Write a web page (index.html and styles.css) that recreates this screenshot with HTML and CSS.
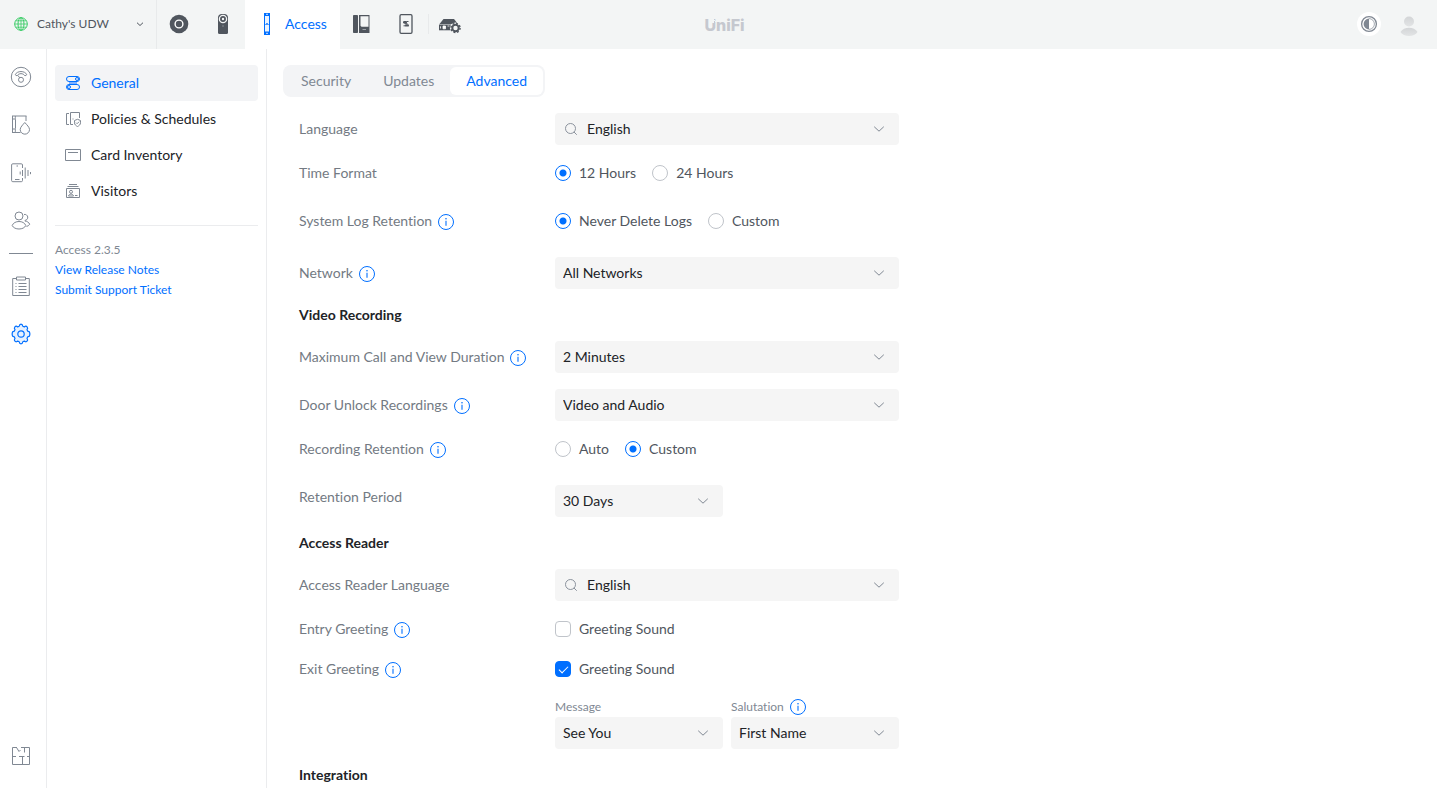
FILE: index.html
```html
<!DOCTYPE html>
<html lang="en">
<head>
<meta charset="utf-8">
<title>UniFi Access - Advanced Settings</title>
<link rel="stylesheet" href="styles.css">
</head>
<body>
<svg class="defs" aria-hidden="true">
  <symbol id="chevron" viewBox="0 0 12 12"><path d="M1.500 4 6 8.200 10.500 4" fill="none" stroke="currentColor" stroke-linecap="round" stroke-linejoin="round"/></symbol>
  <symbol id="search" viewBox="0 0 16 16"><circle cx="7.500" cy="7.500" r="5" fill="none" stroke="currentColor" stroke-width=".9"/><path d="m11.200 11.200 2.300 2.300" stroke="currentColor" stroke-width=".9" stroke-linecap="round"/></symbol>
  <symbol id="info" viewBox="0 0 16 16"><circle cx="8" cy="8" r="7.500" fill="none" stroke="currentColor"/><path d="M8 6.800v5" stroke="currentColor" stroke-width="1.100"/><circle cx="8" cy="4.800" r=".8" fill="currentColor"/></symbol>
</svg>

<header class="topbar">
  <nav class="apps" aria-label="Applications">
    <button class="site" type="button">
      <svg class="globe" viewBox="0 0 14 14" fill="none" stroke="currentColor"><circle cx="7" cy="7" r="6.300"/><ellipse cx="7" cy="7" rx="3" ry="6.300"/><path d="M7 .7v12.600M.7 7h12.600M1.700 3.800h10.600M1.700 10.200h10.600" stroke-width=".8"/></svg>
      <span>Cathy's UDW</span>
      <svg class="site-arrow" viewBox="0 0 12 12"><path d="M3 4.700 6 7.500 9 4.700" fill="none" stroke="currentColor"/></svg>
    </button>
    <button class="app" type="button" aria-label="Network">
      <svg viewBox="0 0 24 24"><circle cx="12" cy="12" r="9.300" fill="currentColor"/><circle cx="12" cy="12" r="3.900" fill="none" stroke="#fff" stroke-width="1.400"/></svg>
    </button>
    <button class="app" type="button" aria-label="Protect">
      <svg viewBox="0 0 24 24"><rect x="7" y="2" width="10" height="20" rx="4" fill="currentColor"/><path d="M7 14h10v6.500a1.500 1.500 0 0 1-1.500 1.500h-7A1.500 1.500 0 0 1 7 20.500z" fill="currentColor"/><circle cx="12" cy="7" r="3.600" fill="none" stroke="#f3f5f5" stroke-width="1.300"/><circle cx="12" cy="7" r="1.200" fill="#f3f5f5"/><circle cx="12" cy="14" r=".8" fill="#8b9198"/></svg>
    </button>
    <button class="app app-active" type="button" aria-current="page">
      <svg class="reader" viewBox="0 0 8 24"><rect x="1.500" y="1.500" width="5" height="21" rx=".5" fill="#eaf3ff" stroke="currentColor"/><path d="M1 1h6v3H1zM1 19.500h6V23H1z" fill="currentColor"/><path d="M2.500 12.500 4 11l1.500 1.500z" fill="none" stroke="currentColor" stroke-width=".7"/><path d="M3 2.300h2M3 21.300h2" stroke="#fff" stroke-width=".8"/></svg>
      <span>Access</span>
    </button>
    <button class="app" type="button" aria-label="Talk">
      <svg viewBox="0 0 24 24"><rect x="3" y="3" width="5" height="18" rx=".8" fill="currentColor"/><path d="M9 3h10.500v18H9z" fill="currentColor"/><path d="M10.500 4.200h8v10.600h-7l-1-1z" fill="#f3f5f5"/><path d="M12.500 17.500h3.500" stroke="#9ca1a7"/></svg>
    </button>
    <button class="app" type="button" aria-label="Connect">
      <svg viewBox="0 0 24 24"><rect x="6" y="2.700" width="12" height="18.600" rx="1.200" fill="none" stroke="currentColor" stroke-width="1.300"/><rect x="9" y="9" width="4" height="2.400" rx="1.200" fill="currentColor"/><rect x="11" y="12.200" width="4" height="2.400" rx="1.200" fill="currentColor"/><path d="M12.500 9.500h2M9.500 13.800h2M10.500 11.700h3" stroke="currentColor"/></svg>
    </button>
    <button class="app app-console" type="button" aria-label="Console settings">
      <svg viewBox="0 0 24 24"><path d="M5.500 7h10.500l4 5H1.500z" fill="currentColor"/><path d="M1 12.500h12v5.800H1z" fill="currentColor"/><path d="M2.500 14.300v2.200M5 14h2.500v2.800H5zM9.500 14h2" stroke="#fff" fill="#fff" stroke-width=".8"/><circle cx="17.500" cy="16" r="5.600" fill="#f3f5f5"/><circle cx="17.500" cy="16" r="3.200" fill="none" stroke="currentColor" stroke-width="2"/><circle cx="17.500" cy="16" r="4.600" fill="none" stroke="currentColor" stroke-width="1.400" stroke-dasharray="1.900 1.713"/></svg>
    </button>
  </nav>
  <div class="brand">UniFi<svg viewBox="0 0 6 6" aria-hidden="true"><path d="M0 0h2v1h1v1H2v2H0zM3 2h1v1H3zM4 0h2v1H4z" fill="#f3f5f5"/></svg></div>
  <div class="user">
    <button class="theme" type="button" aria-label="Theme"><svg viewBox="0 0 24 24"><circle cx="12" cy="12" r="7.400" fill="none" stroke="currentColor" stroke-width="1.300"/><path d="M12 6.600a5.400 5.400 0 0 0 0 10.800z" fill="currentColor"/><path d="M12 6.600a5.400 5.400 0 0 1 0 10.800" fill="none" stroke="currentColor" stroke-width=".7"/></svg></button>
    <button class="avatar" type="button" aria-label="Account"><svg viewBox="0 0 24 24"><defs><linearGradient id="grey" x2="0" y2="1"><stop stop-color="#d3d5d7"/><stop offset="1" stop-color="#e2e4e5"/></linearGradient></defs><circle cx="12" cy="9.500" r="5" fill="url(#grey)"/><path d="M3.500 20c1.500-2.800 5-4.300 8.500-4.300s7 1.500 8.500 4.300c-1.500 2.600-5 4-8.500 4s-7-1.400-8.500-4z" fill="url(#grey)"/></svg></button>
  </div>
</header>

<div class="shell">
  <nav class="rail" aria-label="Sections">
    <a href="#" aria-label="Dashboard"><svg viewBox="0 0 22 22"><circle cx="11" cy="11" r="9.700"/><path d="M5.200 8.700C7 4.500 15 4.500 16.800 8.700M5.200 8.700l1.800 1.200c1.800-3 6.200-3 8 0l1.800-1.200M8 9.500l1.700 2.400"/><circle cx="11" cy="13.800" r="2.500"/></svg></a>
    <a href="#" aria-label="Doors"><svg viewBox="0 0 22 22"><path d="M10.500 18.500H2M2 2h14.500M2.500 2v16.500M5.300 2c0 2 .2 3 .2 4v8.500c0 1-.2 2-.2 4M16 2v5M2 5h3M2 15h3"/><path d="M14.800 8.500c2 2.300 4.700 4.700 4.700 7a4.600 4.600 0 0 1-9.300 0c0-2.300 2.600-4.700 4.600-7z"/></svg></a>
    <a href="#" aria-label="Devices"><svg viewBox="0 0 22 22"><path d="M12.500 6V3c0-.8-.4-1.200-1.200-1.200H2.800c-.8 0-1.200.4-1.200 1.200v15.500c0 .8.400 1.200 1.200 1.200h8.500c.8 0 1.200-.4 1.200-1.200V16M5 17.500h4.500M6.500 4h1.500M10.200 9.500v3M12.500 8v6M15.200 5.500v11M18 8v6M20.500 10v2.200"/></svg></a>
    <a href="#" aria-label="Users"><svg viewBox="0 0 22 22"><circle cx="9" cy="6" r="4"/><path d="M2.200 15.500c1-2.700 3.800-4 6.800-4s5.800 1.300 6.800 4c-1 2.300-3.800 3.500-6.800 3.500s-5.800-1.200-6.800-3.500zM14 4.500a3 3 0 1 1 .8 5.900M14.800 11c2.300.2 4.200 1.500 4.900 3.200-.6 1.200-1.700 1.900-3.200 2.300"/></svg></a>
    <hr class="rail-line">
    <a href="#" aria-label="Logs"><svg viewBox="0 0 22 22"><path d="M6.500 3.500H2.700v17h16.600v-17h-3.800"/><path d="M6.500 2h9v3h-9zM5.500 8.500h1M8.500 8.500h8M5.500 11.500h1M8.500 11.500h8M5.500 14.500h1M8.500 14.500h8M5.500 17.500h1M8.500 17.500h8"/></svg></a>
    <a class="rail-active" href="#" aria-label="Settings" aria-current="page"><svg viewBox="0 0 22 22"><path fill="#e6f1ff" stroke-width="1.200" stroke-linejoin="round" d="M9.200 3.300C9.400 1.700 9.800 1.200 11 1.200s1.600.5 1.800 2.100l1.500.6c1.300-1 1.900-1 2.800-.1s.9 1.500-.1 2.800l.7 1.600c1.600.2 2.100.6 2.100 1.800v2c0 1.200-.5 1.600-2.100 1.800l-.7 1.600c1 1.300 1 1.900.1 2.800s-1.500.9-2.800-.1l-1.500.6c-.2 1.600-.6 2.100-1.800 2.100s-1.600-.5-1.800-2.100l-1.500-.6c-1.300 1-1.900 1-2.800.1s-.9-1.500.1-2.800l-.7-1.600c-1.600-.2-2.100-.6-2.100-1.800v-2c0-1.200.5-1.600 2.100-1.800L5 6.600c-1-1.300-1-1.900-.1-2.800s1.500-.9 2.800.1z"/><circle cx="11" cy="11" r="3.200" stroke-width="1.200"/></svg></a>
    <a class="rail-end" href="#" aria-label="Floor plan"><svg viewBox="0 0 22 22"><path d="M7 2.500H2.500v17h17v-17H11M2.500 11.500H6M9 11.500h5.500M17 11.500h2.500M12.500 11.500v8M6.500 2.500 9 6.500 10.500 5M14.500 2.500v5"/></svg></a>
  </nav>

  <aside class="subnav">
    <nav class="subnav-list" aria-label="Settings">
      <a class="current" href="#" aria-current="page"><svg viewBox="0 0 16 16"><path d="M4 6.500h8v3H4z" fill="#7db1ff" stroke="none"/><rect x="1.500" y="1.500" width="13" height="5" rx="2.500" fill="#f3f4f6"/><rect x="1.500" y="9.500" width="13" height="5" rx="2.500" fill="#f3f4f6"/><circle cx="12" cy="4" r="1.500"/><circle cx="4" cy="12" r="1.500"/></svg>General</a>
      <a href="#"><svg viewBox="0 0 16 16"><path d="M4 2.500H1.500v11H4M8 13.500H5.500v-12h9V7M8 7.500v1"/><path d="M9.500 9.500 12.500 8.300l3 1.200v2.300c0 1.800-1.500 3-3 3.700-1.500-.7-3-1.900-3-3.700zM11 11.600l1.100 1.100 2-2"/></svg>Policies &amp; Schedules</a>
      <a href="#"><svg viewBox="0 0 16 16"><path d="M.5 2.500h15v11H.5zM3 5.500h10"/></svg>Card Inventory</a>
      <a href="#"><svg viewBox="0 0 16 16"><path d="M1.500 5.500h13v9h-13zM2.500 3.500h11M4 1.500h8M3.500 13c.3-2.500 4.700-2.500 5 0zM10 12.500h2.500"/><circle cx="6" cy="8.800" r="1.500"/></svg>Visitors</a>
    </nav>
    <div class="about">
      <span>Access 2.3.5</span>
      <a href="#">View Release Notes</a>
      <a href="#">Submit Support Ticket</a>
    </div>
  </aside>

  <main class="content">
    <div class="tabs" role="tablist">
      <button type="button" role="tab">Security</button>
      <button type="button" role="tab">Updates</button>
      <button class="selected" type="button" role="tab" aria-selected="true">Advanced</button>
    </div>

    <form class="form">
      <div class="row">
        <label class="label" for="language">Language</label>
        <div class="select searchable"><svg class="lens"><use href="#search"/></svg><select id="language"><option>English</option></select><svg class="arrow"><use href="#chevron"/></svg></div>
      </div>
      <div class="row row-radio" role="radiogroup" aria-labelledby="time">
        <span class="label" id="time">Time Format</span>
        <div class="choices">
          <label><input type="radio" name="time" checked>12 Hours</label>
          <label><input type="radio" name="time">24 Hours</label>
        </div>
      </div>
      <div class="row row-radio" role="radiogroup" aria-labelledby="log">
        <span class="label" id="log">System Log Retention<svg class="info"><use href="#info"/></svg></span>
        <div class="choices">
          <label><input type="radio" name="log" checked>Never Delete Logs</label>
          <label><input type="radio" name="log">Custom</label>
        </div>
      </div>
      <div class="row">
        <label class="label" for="network">Network<svg class="info"><use href="#info"/></svg></label>
        <div class="select"><select id="network"><option>All Networks</option></select><svg class="arrow"><use href="#chevron"/></svg></div>
      </div>

      <h2>Video Recording</h2>
      <div class="row">
        <label class="label" for="duration">Maximum Call and View Duration<svg class="info"><use href="#info"/></svg></label>
        <div class="select"><select id="duration"><option>2 Minutes</option></select><svg class="arrow"><use href="#chevron"/></svg></div>
      </div>
      <div class="row">
        <label class="label" for="unlock">Door Unlock Recordings<svg class="info"><use href="#info"/></svg></label>
        <div class="select"><select id="unlock"><option>Video and Audio</option></select><svg class="arrow"><use href="#chevron"/></svg></div>
      </div>
      <div class="row row-radio" role="radiogroup" aria-labelledby="retention">
        <span class="label" id="retention">Recording Retention<svg class="info"><use href="#info"/></svg></span>
        <div class="choices">
          <label><input type="radio" name="retention">Auto</label>
          <label><input type="radio" name="retention" checked>Custom</label>
        </div>
      </div>
      <div class="row row-top">
        <label class="label" for="period">Retention Period</label>
        <div class="pair">
          <div class="select"><select id="period"><option>30 Days</option></select><svg class="arrow"><use href="#chevron"/></svg></div>
        </div>
      </div>

      <h2>Access Reader</h2>
      <div class="row">
        <label class="label" for="reader-language">Access Reader Language</label>
        <div class="select searchable"><svg class="lens"><use href="#search"/></svg><select id="reader-language"><option>English</option></select><svg class="arrow"><use href="#chevron"/></svg></div>
      </div>
      <div class="row">
        <span class="label">Entry Greeting<svg class="info"><use href="#info"/></svg></span>
        <div class="choices"><label><input type="checkbox">Greeting Sound</label></div>
      </div>
      <div class="row">
        <span class="label">Exit Greeting<svg class="info"><use href="#info"/></svg></span>
        <div class="choices"><label><input type="checkbox" checked>Greeting Sound</label></div>
      </div>
      <div class="row">
        <div class="pair pair-indent">
          <div class="field">
            <label for="message">Message</label>
            <div class="select"><select id="message"><option>See You</option></select><svg class="arrow"><use href="#chevron"/></svg></div>
          </div>
          <div class="field">
            <label for="salutation">Salutation<svg class="info"><use href="#info"/></svg></label>
            <div class="select"><select id="salutation"><option>First Name</option></select><svg class="arrow"><use href="#chevron"/></svg></div>
          </div>
        </div>
      </div>

      <h2>Integration</h2>
    </form>
  </main>
</div>
</body>
</html>
```

FILE: styles.css
```css
:root {
  --blue: #006fff;
  --text: #212327;
  --soft: #50565e;
  --muted: #737a83;
  --icon: #808893;
  --line: #ebecee;
}

* { box-sizing: border-box; }

body {
  margin: 0;
  height: 100vh;
  display: flex;
  flex-direction: column;
  font: 14px/20px Lato, "Open Sans", sans-serif;
  font-variant-ligatures: none;
  color: var(--text);
  background: #fff;
}

button, select {
  font: inherit;
  font-variant-ligatures: none;
  color: inherit;
  border: 0;
  background: none;
  padding: 0;
}

a { color: var(--blue); text-decoration: none; }

.defs { position: absolute; width: 0; height: 0; }

/* Top bar */
.topbar {
  flex: none;
  display: grid;
  grid-template-columns: 1fr auto 1fr;
  height: 49px;
  background: #f3f5f5;
}

.apps { display: flex; }

.site, .app { padding-bottom: 1px; }

.site {
  display: flex;
  align-items: center;
  width: 157px;
  padding-left: 14px;
  padding-right: 10px;
  gap: 9px;
  border-right: 1px solid #e8eaeb;
  color: var(--soft);
  font-size: 12px;
}

.globe { width: 14px; height: 14px; color: #38cc65; }
.site-arrow { width: 12px; height: 12px; margin-left: auto; }

.app {
  display: flex;
  align-items: center;
  justify-content: center;
  width: 44px;
  color: #50565e;
}

.app svg { width: 24px; height: 24px; }

.app-active {
  justify-content: flex-start;
  width: 95px;
  padding-left: 18px;
  gap: 14px;
  background: #fff;
  color: var(--blue);
}

.app-active .reader { width: 8px; }

.app-console { position: relative; }

.app-console::before {
  content: "";
  position: absolute;
  left: 0;
  top: 14px;
  height: 20px;
  border-left: 1px solid #e8eaeb;
}

.brand {
  position: relative;
  align-self: center;
  margin-left: 12px;
  color: #c5c8cf;
  font: 800 16px/20px Inter, sans-serif;
}

.brand svg {
  position: absolute;
  left: 8px;
  top: 4px;
  width: 6px;
  height: 6px;
}

.user {
  display: flex;
  align-items: center;
  justify-content: flex-end;
  gap: 16px;
  padding: 0 16px 1px 0;
}

.user button, .user svg { display: block; width: 24px; height: 24px; }
.theme { border-radius: 50%; background: #fff; color: var(--icon); }

/* Left rail */
.shell { flex: 1; min-height: 0; display: flex; }

.rail {
  flex: none;
  display: flex;
  flex-direction: column;
  width: 47px;
  padding: 4px 0 8px;
  border-right: 1px solid var(--line);
}

.rail a {
  display: flex;
  align-items: center;
  height: 48px;
  padding-left: 10px;
  color: var(--icon);
}

.rail svg { width: 22px; height: 22px; fill: none; stroke: currentColor; }
.rail .rail-active { color: var(--blue); }
.rail .rail-end { margin-top: auto; }

.rail-line {
  width: 24px;
  margin: 8px 9px;
  border: 0;
  border-top: 1px solid var(--icon);
}

/* Settings navigation */
.subnav {
  flex: none;
  width: 220px;
  padding: 16px 8px;
  border-right: 1px solid var(--line);
}

.subnav-list {
  padding-bottom: 16px;
  border-bottom: 1px solid var(--line);
}

.subnav-list a {
  display: flex;
  align-items: center;
  gap: 10px;
  height: 36px;
  padding: 0 10px;
  border-radius: 4px;
  color: var(--text);
}

.subnav-list svg {
  width: 16px;
  height: 16px;
  fill: none;
  stroke: var(--icon);
}

.subnav-list .current { background: #f3f4f6; color: var(--blue); }
.subnav-list .current svg { stroke: currentColor; }

.about {
  display: flex;
  flex-direction: column;
  align-items: flex-start;
  padding-top: 14px;
  font-size: 12px;
  color: var(--icon);
}

/* Content */
.content { flex: 1; min-width: 0; padding: 16px 16px 0; overflow: auto; }

.tabs {
  display: inline-flex;
  vertical-align: top;
  height: 32px;
  padding: 2px;
  border-radius: 8px;
  background: #f3f4f6;
}

.tabs button { padding: 0 16px; border-radius: 6px; color: var(--icon); }
.tabs .selected { background: #fff; color: var(--blue); }

.form {
  display: flex;
  flex-direction: column;
  gap: 16px;
  max-width: 616px;
  padding: 16px 0 0 16px;
}

.form h2 { margin: 0; font-size: 14px; line-height: 20px; font-weight: 700; }

.row { display: flex; align-items: center; }
.row-radio { padding-bottom: 8px; }
.row-top { align-items: flex-start; }

.label {
  flex: none;
  display: flex;
  align-items: center;
  width: 256px;
  line-height: 24px;
  color: var(--muted);
}

.info {
  width: 16px;
  height: 16px;
  margin: 2px 0 0 6px;
  color: var(--blue);
}

.select { position: relative; flex: 1; }

.select select {
  display: block;
  appearance: none;
  width: 100%;
  height: 32px;
  padding: 0 32px 0 8px;
  border-radius: 4px;
  background: #f5f5f5;
}

.searchable select { padding-left: 32px; }

.lens, .arrow { position: absolute; z-index: 1; pointer-events: none; color: var(--icon); }
.lens { left: 8px; top: 8px; width: 16px; height: 16px; }
.arrow { right: 14px; top: 10px; width: 12px; height: 12px; }

.choices { display: flex; gap: 16px; color: var(--soft); line-height: 24px; }
.choices label { display: flex; align-items: center; gap: 8px; }

.choices input {
  appearance: none;
  width: 16px;
  height: 16px;
  margin: 0;
  border: 1px solid #c0c4ca;
  background: #fff;
}

.choices input[type="radio"] { border-radius: 50%; }

.choices input[type="radio"]:checked {
  border-color: var(--blue);
  background: radial-gradient(circle, var(--blue) 3px, #fff 4px);
}

.choices input[type="checkbox"] { border-radius: 4px; }

.choices input[type="checkbox"]:checked {
  display: grid;
  place-items: center;
  border-color: var(--blue);
  background: var(--blue);
}

.choices input[type="checkbox"]:checked::after {
  content: "";
  width: 8px;
  height: 4px;
  margin-bottom: 2px;
  border: solid #fff;
  border-width: 0 0 1px 1px;
  transform: rotate(-45deg);
}

.pair {
  flex: 1;
  display: grid;
  grid-template-columns: 1fr 1fr;
  gap: 8px;
}

.pair-indent { margin-left: 256px; }

.field label {
  display: flex;
  align-items: center;
  height: 20px;
  font-size: 12px;
  color: var(--icon);
}

.field .info { margin-top: 0; }
```
